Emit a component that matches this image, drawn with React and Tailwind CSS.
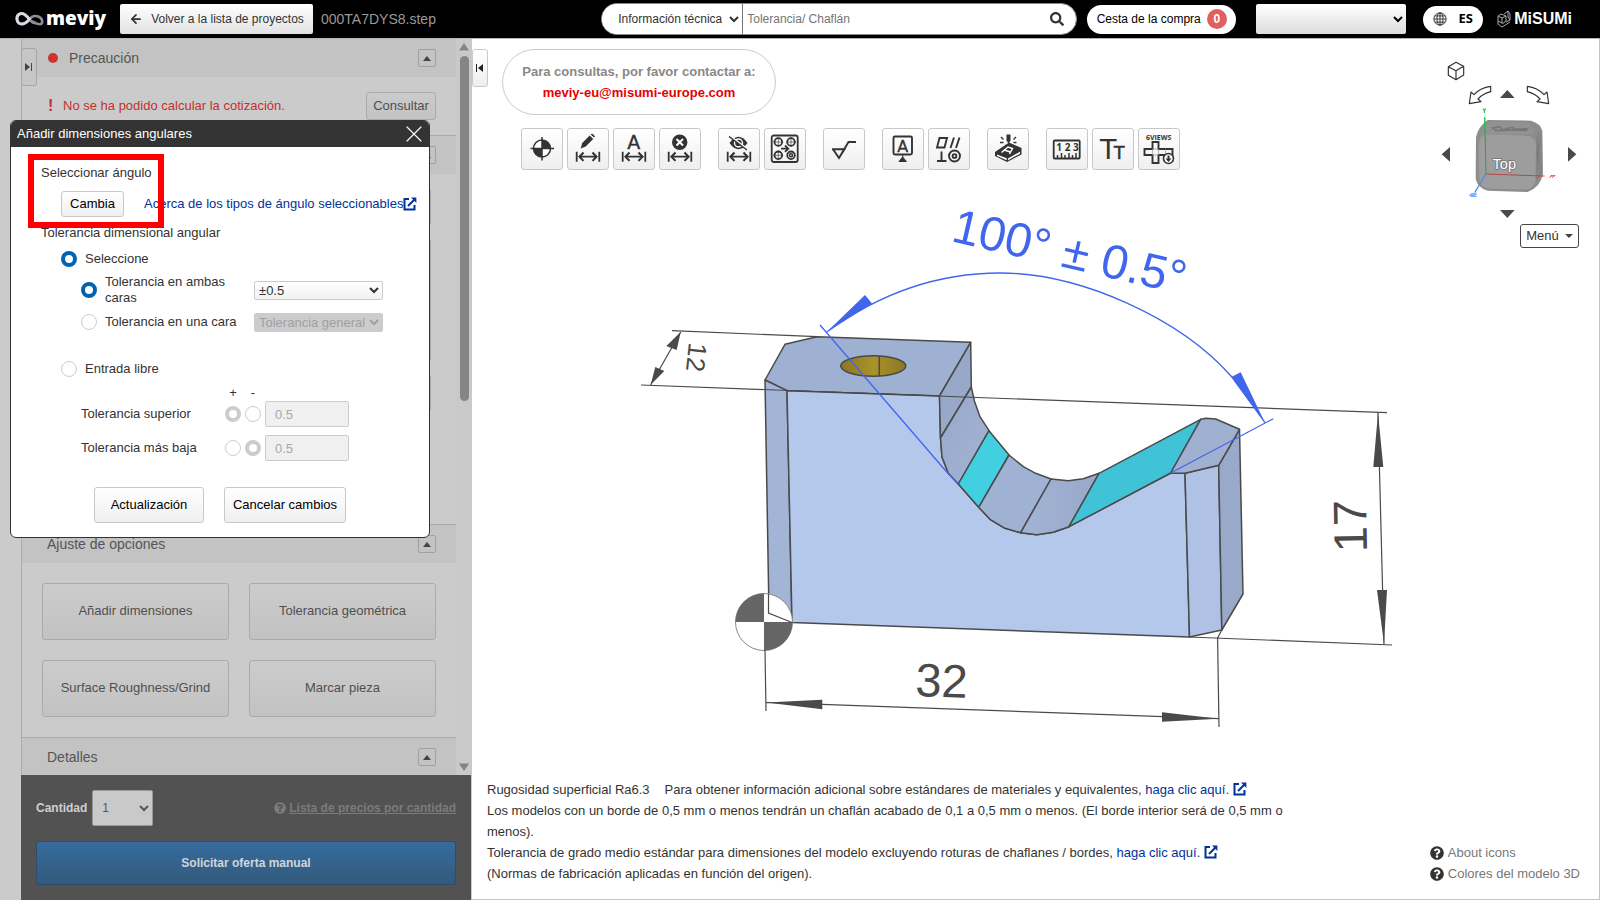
import { useState } from 'react'
import { ArrowLeft, X } from 'lucide-react'
import { FaQuestionCircle, FaSearch } from 'react-icons/fa'

const INK = '#333333'
const EDGE = '#4a4a4a'
const BLUE = '#4066ee'

const PLAIN_BUTTON = 'border border-[#c8c8c8] rounded-[3px] bg-linear-to-b from-white to-[#efefef]'
const SHADED_BUTTON = 'border border-[#aaaaaa] rounded-[3px] bg-linear-to-b from-[#cccccc] to-[#c2c2c2] text-[#4f4f4f]'
const RADIO = 'appearance-none size-4 shrink-0 rounded-full bg-white border border-[#cccccc] checked:border-4 checked:border-[#0063b1] disabled:checked:border-[#cccccc]'

function ExternalIcon() {
  return (
    <svg viewBox="0 0 14 14" className="inline size-[14px] align-[-2px]" fill="none" stroke="#003399" strokeWidth="2">
      <path d="M6 2H1.5v10.500h10V8" />
      <path d="M5 9l6.500-6.500" />
      <path d="M8 .6h5.400V6z" fill="#003399" stroke="none" />
    </svg>
  )
}

function Header() {
  return (
    <header className="h-[38px] shrink-0 bg-black flex items-center text-xs">
      <a href="#home" className="flex items-center ml-[15px] w-[105px] text-white" aria-label="meviy">
        <svg viewBox="0 0 29 16" className="w-[29px] h-4" fill="none">
          <path d="M21 11C16 15 12 1 6 2.500C0 4 1 13 7 13C13 13 14 5 20 5C25 5 28 8 27 12C26 15 20 12 16 10" stroke="#8d8d95" strokeWidth="2.600" />
          <path d="M15 9C12 5 9 2 6 2.500C0 4 1 13 7 13C10 13 12 11 14 9" stroke="#d9d9de" strokeWidth="3" />
        </svg>
        <span className="font-['Open_Sans'] font-extrabold text-[19px] leading-6 ml-[2px] pb-[2px]">meviy</span>
      </a>
      <button className="h-[30px] w-[193px] rounded-[2px] bg-linear-to-b from-white to-[#e2e2e2] text-[#333] flex items-center justify-center gap-2">
        <ArrowLeft className="size-[14px]" strokeWidth={3} />
        Volver a la lista de proyectos
      </button>
      <span className="ml-2 text-sm text-[#999999]">000TA7DYS8.step</span>

      <form className="ml-auto flex items-center h-8 w-[476px] rounded-full bg-white border border-[#888] overflow-hidden">
        <select aria-label="Tipo de búsqueda" defaultValue="info" className="h-full w-[141px] pl-3 pr-1 border-r border-[#777] bg-white text-[#333] outline-none">
          <option value="info">Información técnica</option>
        </select>
        <input aria-label="Texto de búsqueda" placeholder="Tolerancia/ Chaflán" className="flex-1 h-full px-1 outline-none placeholder:text-[#757575]" />
        <button type="button" aria-label="Buscar" className="px-3">
          <FaSearch className="size-[14px] text-[#333]" />
        </button>
      </form>
      <button className="ml-[10px] h-[29px] w-[149px] rounded-full bg-white text-black flex items-center justify-center gap-[6px]">
        Cesta de la compra
        <span className="size-5 rounded-full bg-[#e06060] text-white font-bold leading-5">0</span>
      </button>
      <select aria-label="Cuenta" className="ml-5 h-[30px] w-[150px] rounded-[2px] bg-linear-to-b from-white to-[#dddddd] pr-1">
        <option></option>
      </select>
      <button className="ml-[17px] h-[27px] w-[60px] rounded-full bg-white flex items-center justify-center gap-[11px] font-['Open_Sans'] font-bold text-[13px]">
        <svg viewBox="0 0 16 16" className="size-[14px]" fill="none" stroke="#222">
          <circle cx="8" cy="8" r="7" />
          <ellipse cx="8" cy="8" rx="3.500" ry="7" />
          <path d="M8 1v14M1 8h14M2 4.500h12M2 11.500h12" />
        </svg>
        ES
      </button>
      <a href="#misumi" className="ml-[14px] mr-7 flex items-center gap-[3px] text-white" aria-label="MISUMI">
        <svg viewBox="0 0 14 18" className="w-[14px] h-[18px]" fill="none" stroke="#aaa">
          <path d="M1 6l4 2v5l-4-2zM5 8l4-2v5l-4 3M1 6l3-2 5 2M7 4l4-3 2 3v6l-4 2M11 1v6l2 3M1 11v3l4 3 8-5" />
        </svg>
        <span className="font-bold text-base leading-6">MiSUMi</span>
      </a>
    </header>
  )
}

function SectionHeader({ title, alert }) {
  return (
    <div className="h-[38px] shrink-0 flex items-center bg-[#c3c3c3] pl-[25px] pr-5 text-sm text-[#555]">
      {alert && <span className="size-[10px] rounded-full bg-[#cc3333] mr-[11px] ml-[1px]"></span>}
      <h2>{title}</h2>
      <button aria-label={`Plegar ${title}`} className="ml-auto size-[18px] border border-[#a0a0a0] rounded-[2px] flex items-center justify-center">
        <svg viewBox="0 0 8 5" className="w-2 h-[5px]"><path d="M0 5l4-5 4 5z" fill="#444" /></svg>
      </button>
    </div>
  )
}

const OPTIONS = ['Añadir dimensiones', 'Tolerancia geométrica', 'Surface Roughness/Grind', 'Marcar pieza']

function Sidebar() {
  return (
    <aside className="w-[472px] shrink-0 flex bg-[#cbcbcb]">
      <div className="w-[21px] shrink-0"></div>
      <div className="flex-1 min-w-0 flex flex-col relative">
        <button aria-label="Expandir panel" className="absolute top-[9px] left-0 w-4 h-[38px] border border-[#a5a5a5] rounded-[3px] bg-[#c6c6c6] flex items-center justify-center">
          <svg viewBox="0 0 8 8" className="size-2"><path d="M0 0l5 4-5 4zM6 0h1v8h-1z" fill="#444" /></svg>
        </button>
        <div className="flex-1 min-h-0 flex">
          <div className="flex-1 flex flex-col overflow-hidden border-l border-[#acacac]">
            <SectionHeader title="Precaución" alert />
            <div className="h-[58px] shrink-0 flex items-center pl-[26px] pr-5 text-[13px] text-[#c62f2f]">
              <b className="w-[15px] text-base">!</b>
              No se ha podido calcular la cotización.
              <button className={`${SHADED_BUTTON} ml-auto h-7 w-[70px]`}>Consultar</button>
            </div>
            <div className="border-t border-[#a9a9a9]"><SectionHeader title="" /></div>
            <div className="h-[350px] shrink-0 flex flex-col gap-4 pt-4 pl-5 pr-[25px]">
              <div className="h-[34px] border border-[#aaa]"></div>
              <div className="h-[120px] border border-[#aaa]"></div>
              <div className="h-[34px] border border-[#aaa]"></div>
            </div>
            <div className="border-t border-[#a9a9a9]"><SectionHeader title="Ajuste de opciones" /></div>
            <div className="grid grid-cols-2 gap-5 p-5 text-[13px]">
              {OPTIONS.map((name) => (
                <button key={name} className={`${SHADED_BUTTON} h-[57px] pb-[1px]`}>{name}</button>
              ))}
            </div>
            <div className="border-t border-[#a9a9a9]"><SectionHeader title="Detalles" /></div>
          </div>
          <div className="w-4 shrink-0 bg-[#c9c9c9] flex flex-col items-center py-1">
            <svg viewBox="0 0 10 8" className="w-[10px] h-2"><path d="M0 7.500L5 0l5 7.500z" fill="#858585" /></svg>
            <div className="w-[9px] h-[345px] mt-[5px] rounded-full bg-[#858585]"></div>
            <svg viewBox="0 0 10 8" className="w-[10px] h-2 mt-auto"><path d="M0 .500h10L5 8z" fill="#858585" /></svg>
          </div>
        </div>
        <div className="h-[125px] shrink-0 mr-[1px] pt-[15px] pl-[15px] pr-[15px] bg-[#525252] text-xs">
          <div className="flex items-center">
            <label htmlFor="qty" className="font-bold text-[#cfcfcf]">Cantidad</label>
            <select id="qty" className="ml-[5px] h-9 w-[61px] pl-[5px] pr-[6px] rounded-[2px] border border-[#999] bg-[#c9c9c9] text-[#555]">
              <option>1</option>
            </select>
            <a href="#precios" className="ml-auto flex items-center gap-[3px] font-bold text-[#7b7b7b]">
              <FaQuestionCircle className="size-3" />
              <span className="underline">Lista de precios por cantidad</span>
            </a>
          </div>
          <button className="mt-[15px] w-full h-11 rounded-[3px] border border-[#2b4d69] bg-linear-to-b from-[#356c9f] to-[#335a7b] text-[#d0d6dc] font-bold">
            Solicitar oferta manual
          </button>
        </div>
      </div>
    </aside>
  )
}

const DIM_ARROW = (
  <g fill="none" stroke={INK} strokeWidth="1.800">
    <path d="M9.700 23.700v10M32.300 23.700v10M12 28.700h18" />
    <path d="M16.500 24.500l-4 4.200 4 4.200M25.500 24.500l4 4.200-4 4.200" strokeWidth="2.100" />
  </g>
)

function HoleMark({ x, y, filled }) {
  return (
    <g fill="none" stroke={INK}>
      <circle cx={x} cy={y} r="3.800" strokeWidth="1.800" />
      {filled
        ? <circle cx={x} cy={y} r="1.500" strokeWidth="1.500" />
        : <path d={`M${x - 5} ${y}h10M${x} ${y - 5}v10`} strokeWidth=".6" />}
    </g>
  )
}

const TOOLS = [
  [
    ['Origen', <g key="i">
      <circle cx="21" cy="20.500" r="8.500" fill="#fff" stroke={INK} strokeWidth="1.500" />
      <path d="M21 20.500V12a8.500 8.500 0 0 1 8.500 8.500zM21 20.500V29a8.500 8.500 0 0 1-8.500-8.500z" fill={INK} />
      <path d="M21 9v23.500M9.500 20.500h23.500" stroke={INK} strokeWidth="1.500" />
    </g>],
    ['Editar dimensión', <g key="i">
      {DIM_ARROW}
      <path d="M13.700 20.500l1.500-5.500 7.500-7.500 3.500 3.500-7.500 7.500zM23.700 6.500l1-.7q1.500-.3 3.300 2.800l-1 1z" fill={INK} />
    </g>],
    ['Texto de dimensión', <g key="i">
      {DIM_ARROW}
      <text x="20.800" y="20.500" textAnchor="middle" fontSize="19" fill={INK} stroke={INK} strokeWidth=".4" fontFamily="DejaVu Sans">A</text>
    </g>],
    ['Borrar dimensión', <g key="i">
      {DIM_ARROW}
      <circle cx="20.700" cy="14.300" r="7.700" fill={INK} />
      <path d="M17.500 11l6.500 6.500M24 11l-6.500 6.500" stroke="#fff" strokeWidth="2" />
    </g>],
  ],
  [
    ['Ocultar dimensión', <g key="i">
      {DIM_ARROW}
      <path d="M11.500 15q9-12.500 18 0q-9 12.500-18 0z" fill={INK} />
      <circle cx="20.500" cy="15" r="4" fill={INK} stroke="#fff" strokeWidth="1.400" />
      <path d="M12.500 8.500L30 21.500" stroke="#fff" strokeWidth="2" />
      <path d="M11 8.500L29 22" stroke={INK} strokeWidth="1.500" />
    </g>],
    ['Agujeros', <g key="i">
      <rect x="7.700" y="7.500" width="26" height="26.500" rx="2" fill="none" stroke={INK} strokeWidth="1.800" />
      <HoleMark x={14.3} y={14} />
      <HoleMark x={27} y={14} />
      <HoleMark x={14.3} y={27.3} />
      <HoleMark x={27} y={27.3} filled />
      <path d="M17 20.700h7M21 17.500l3.300 3.200-3.300 3.200" fill="none" stroke={INK} strokeWidth="1.800" />
    </g>],
  ],
  [
    ['Rugosidad', <path key="i" d="M9 21.300h12.500L16 30L10 21.300M16 30L25.500 14h7.500" fill="none" stroke={INK} strokeWidth="1.900" />],
  ],
  [
    ['Nota', <g key="i">
      <rect x="11.500" y="8.500" width="18.500" height="18" rx="1.500" fill="none" stroke={INK} strokeWidth="1.900" />
      <text x="20.700" y="23.500" textAnchor="middle" fontSize="16" fill={INK} stroke={INK} strokeWidth=".3" fontFamily="DejaVu Sans">A</text>
      <path d="M20.700 27v4M17 33.500l3.700-4.500 3.700 4.500z" stroke={INK} fill={INK} />
    </g>],
    ['Tolerancia geométrica', <g key="i" fill="none" stroke={INK} strokeWidth="1.900">
      <path d="M11.500 10h7.500l-2.500 9.500h-7.500zM26 9.500l-3.500 10.500M31.500 9.500l-3.500 10.500M13.500 23.500v9.500M9 33h9.500" />
      <circle cx="26.500" cy="28" r="5.500" />
      <circle cx="26.500" cy="28" r="1.900" />
    </g>],
  ],
  [
    ['Marcado', <g key="i">
      <path d="M8 24L22 14.500 34.500 20v6.500L20 34 8 28z" fill={INK} />
      <path d="M10 26.500l9.700 3.700v2L10 28zM21 30.500l12-6.800v2L21 32.300z" fill="#fff" />
      <path d="M14.500 24.500L21 19l4.500 1.500-3 5.500M17 22l6.500 2" fill="none" stroke="#fff" strokeWidth="1.500" />
      <path d="M19.500 6.500h4v6l-2 3-2-3z" fill={INK} />
      <path d="M14 9l2.500 2.500M13 14.500h3.500M29 9l-2.500 2.500M26.500 14.500h3" stroke={INK} strokeWidth="1.400" />
    </g>],
  ],
  [
    ['Escala', <g key="i">
      <rect x="7.700" y="12.500" width="26" height="18" rx="1" fill="none" stroke={INK} strokeWidth="1.800" />
      <text x="21.500" y="22.700" textAnchor="middle" fontSize="10" fontWeight="700" fill={INK} fontFamily="Open Sans">1 2 3</text>
      <path d="M11.500 27v3M15.500 25v5M19 27v3M23 25v5M26.500 27v3M30 25v5" stroke={INK} strokeWidth="1.500" />
    </g>],
    ['Tamaño de texto', <g key="i" fill={INK} fontFamily="DejaVu Sans">
      <text x="8" y="30.700" fontSize="27">T</text>
      <text x="22" y="30.700" fontSize="17" stroke={INK} strokeWidth=".6">T</text>
    </g>],
    ['6VIEWS', <g key="i">
      <text x="20.700" y="11.500" textAnchor="middle" fontSize="7" fontWeight="700" fill={INK} fontFamily="Open Sans">6VIEWS</text>
      <path d="M14.500 14h6v7h14v6h-14v8h-6v-8h-8v-6h8z" fill="none" stroke={INK} strokeWidth="1.900" />
      <path d="M14.500 21h6v6h-6zM27.500 21v6" fill="none" stroke="#999" strokeWidth=".7" />
      <circle cx="30.500" cy="30.500" r="5" fill="#fff" stroke={INK} strokeWidth="1.600" />
      <path d="M29.500 27.500h2v3h2l-3 3.500-3-3.500h2z" fill={INK} />
    </g>],
  ],
]

function Toolbar() {
  return (
    <div className="flex gap-[17px] mt-[13px] ml-[49px]">
      {TOOLS.map((group) => (
        <div key={group[0][0]} className="flex gap-1">
          {group.map(([name, icon]) => (
            <button key={name} aria-label={name} className={`${PLAIN_BUTTON} size-[42px]`}>
              <svg viewBox="1 1 40 40" className="size-10">{icon}</svg>
            </button>
          ))}
        </div>
      ))}
    </div>
  )
}

// Part geometry, in viewer coordinates
function PartDrawing() {
  return (
    <svg viewBox="472 170 1127 608" preserveAspectRatio="xMinYMin meet" className="w-full flex-1 min-h-0">
      <defs>
        <linearGradient id="wallA" x1="0" y1="0" x2="1" y2="1">
          <stop offset="0" stopColor="#97a7c7" />
          <stop offset="1" stopColor="#a2b4d5" />
        </linearGradient>
        <linearGradient id="wallB" x1="0" y1="0" x2="1" y2="0">
          <stop offset="0" stopColor="#a2b4d5" />
          <stop offset="1" stopColor="#98a8c8" />
        </linearGradient>
        <linearGradient id="hole" x1="0" y1="0" x2="1" y2="0">
          <stop offset="0" stopColor="#8c7622" />
          <stop offset=".5" stopColor="#a8932b" />
          <stop offset="1" stopColor="#8c7622" />
        </linearGradient>
      </defs>

      <g stroke={EDGE} strokeWidth="1.500" strokeLinejoin="round">
        <path d="M765 380L785 344.300 817 336.700 970.700 342.300 939.500 396 787 390.700z" fill="#9fb1d2" />
        <path d="M765 380L787 390.700 792 622.500 769 613z" fill="#a3b5d6" />
        <path d="M787 390.700L939.500 396 940.500 438 942 457 948.300 473.300 958.300 484 978.700 507.300 990 519.300 1005 528.300 1020.700 532.700 1036.700 534.700 1053.300 532.300 1069 526.700 1170.700 473 1185 473.300 1189.500 637 792 622.500z" fill="#b4c8ec" />
        <path d="M1185 473.300L1218.700 465.300 1221.800 630 1189.500 637z" fill="#afc1e4" />
        <path d="M1218.700 465.300L1239.500 429.300 1243 594 1221.800 630z" fill="#99a9c9" />
        <path d="M970.700 342.300L971.300 387 940.500 438 939.500 396z" fill="#98a8c8" />
        <path d="M971.300 387L974.300 400.700 980 416.700 989 430.700 958.300 484 948.300 473.300 942 457 940.500 438z" fill="url(#wallA)" />
        <path d="M989 430.700L1009 455 978.700 507.300 958.300 484z" fill="#42cfe0" />
        <path d="M1009 455L1023.300 466.700 1035.700 473.300 1051 479 1020.700 532.700 1005 528.300 990 519.300 978.700 507.300z" fill="#a0b2d3" />
        <path d="M1051 479L1068.300 480.700 1083.300 478.700 1099 473.300 1069 526.700 1053.300 532.300 1036.700 534.700 1020.700 532.700z" fill="url(#wallB)" />
        <path d="M1099 473.300L1200.700 419.300 1170.700 473 1069 526.700z" fill="#40c3d6" />
        <path d="M1200.700 419.300L1206 418.300 1215.700 419 1239.500 429.300 1218.700 465.300 1185 473.300 1170.700 473z" fill="#9fb0d1" />
        <ellipse cx="873.300" cy="366" rx="32.500" ry="10.300" fill="url(#hole)" />
        <path d="M879.300 356v20" />
      </g>

      {/* Origin marker */}
      <circle cx="764" cy="622" r="28.500" fill="#fff" stroke="#888" />
      <path d="M764 622V593.500a28.500 28.500 0 0 0-28.500 28.500zM764 622V650.500a28.500 28.500 0 0 0 28.500-28.500z" fill="#656565" />
      <path d="M768.500 594v19l23.500 9.500" fill="none" stroke={EDGE} strokeWidth="1.200" />

      {/* Linear dimensions */}
      <g fill="none" stroke={EDGE} strokeWidth="1.200">
        <path d="M672 330.700L817 336.700M641 385L1387 412.700M680.700 332L650.700 384.700" />
        <path d="M1378 413L1384 644M1189 637L1392 645M1221.800 630L1217.600 638" />
        <path d="M765 650L766 711M1217.600 638L1219 727M766 702.300L1218.800 718.700" />
      </g>
      <g fill={EDGE}>
        <path d="M680.700 332L666.300 346 676.700 350zM650.700 384.700L655.300 367 664.300 371z" />
        <path d="M1378 413L1373.300 467h10zM1384 644L1377 590h10z" />
        <path d="M766 702.500L822.300 699.700v9.500zM1218.800 718.700L1162 712.300v9.500z" />
      </g>
      <g fill={EDGE} fontFamily="Liberation Sans" fontSize="47">
        <text x="915" y="696" transform="rotate(2 915 696)">32</text>
        <text x="1367" y="552" transform="rotate(-91 1367 552)">17</text>
        <text x="689" y="342" fontSize="26" transform="rotate(96 689 342)">12</text>
      </g>

      {/* Angular dimension */}
      <g fill="none" stroke={BLUE} strokeWidth="1.300">
        <path d="M826.700 332C850 315 910 273 1000 273C1080 273 1180 318 1231.700 376.700L1265 422.700" />
        <path d="M820 325L945 470 958.300 484M1273.300 418.700L1170.700 473" />
      </g>
      <path d="M826.700 332L865 295 872 303.500zM1265 422.700L1231.300 377 1240.700 372.300z" fill={BLUE} />
      <text x="950" y="241" transform="rotate(13 950 241)" fontFamily="Liberation Sans" fontSize="48" fill={BLUE}>100° ± 0.5°</text>
    </svg>
  )
}

function ViewCube() {
  return (
    <svg viewBox="-3 0 600 510" className="w-[200px] h-[170px]">
      <g fill="#fff" stroke="#333" strokeWidth="3.500" strokeLinejoin="round">
        <path d="M145 50l23-13 23 12v26l-23 14-23-13zM145 50l23 12 23-13M168 62v27" />
        <path d="M272 109v16q-24 6-38 22l9 8-35 6 5-35 9 8q20-22 50-25zM382 109v16q24 6 38 22l-9 8 35 6-5-35-9 8q-20-22-50-25z" />
      </g>
      <path d="M300 144l22-24 22 24zM300 480h44l-22 24zM150 291v44l-25-22zM504 291v44l25-22z" fill="#4a4a4a" />
      <path d="M228 262q5-30 35-52l130 2q28 8 34 30l2 130q-8 40-46 54l-120-4q-30-8-36-36z" fill="#8d8d8d" />
      <path d="M236 280q4-26 20-28l132 6q18 8 20 24l-2 110q-6 22-24 26l-118-2q-22-6-26-24z" fill="#9d9d9d" />
      <path d="M240 256q10-30 34-40l112 2q14 8 16 34z" fill="#929292" />
      <path d="M408 260q12-26 16 0l2 100q-4 28-18 34z" fill="#858585" />
      <path d="M278 234l22-4 6 10 30-8 10 6 36-2-4 6-30-2-60 2z" fill="none" stroke="#777" strokeWidth="5" />
      <path d="M417 280q-6 20-2 60" fill="none" stroke="#777" strokeWidth="4" />
      <path d="M254 202l4 170" stroke="#2f9e4f" strokeWidth="3" />
      <path d="M254 202l1 34" stroke="#1fd04a" strokeWidth="4" />
      <path d="M249 176l4 5 4-5M253 181v8" stroke="#1fd04a" strokeWidth="4" fill="none" />
      <path d="M258 372l170 6" stroke="#b04a4a" strokeWidth="3" />
      <path d="M426 378h8M448 383l8-6M452 377l14 0M456 383l8-6" stroke="#ff4040" strokeWidth="3" />
      <path d="M258 372l-34 56" stroke="#4d8fd8" strokeWidth="4" />
      <path d="M212 432h18l-18 7h18M208 437l12-7" stroke="#6fb2ff" strokeWidth="4" fill="none" />
      <text x="313" y="356" textAnchor="middle" fontSize="44" fill="#ffffff" stroke="#707070" strokeWidth="5" paintOrder="stroke" fontFamily="Liberation Sans">Top</text>
    </svg>
  )
}

function Viewer() {
  return (
    <main className="relative flex-1 min-w-0 flex flex-col bg-white border-r border-b border-[#c4c4c4] text-[13px] text-[#333]">
      <button aria-label="Contraer panel" className={`${PLAIN_BUTTON} absolute top-[10px] left-0 w-4 h-[38px] flex items-center justify-center`}>
        <svg viewBox="0 0 8 8" className="size-2"><path d="M7 0L2 4l5 4zM0 0h1v8h-1z" fill="#222" /></svg>
      </button>
      <div className="absolute right-0 top-[11px] flex flex-col items-end">
        <ViewCube />
        <button className="mt-1 mr-5 h-6 w-[59px] border border-[#444] rounded-[3px] bg-white flex items-center justify-center gap-[6px]">
          Menú
          <svg viewBox="0 0 8 4" className="w-2 h-1"><path d="M0 0h8L4 4z" fill="#444" /></svg>
        </button>
      </div>

      <div className="mt-[10px] ml-[30px] w-[274px] h-[66px] rounded-full border border-[#cccccc] flex flex-col items-center justify-center font-bold leading-[21px]">
        <span className="text-[#888888]">Para consultas, por favor contactar a:</span>
        <a href="mailto:meviy-eu@misumi-europe.com" className="text-[#e60000]">meviy-eu@misumi-europe.com</a>
      </div>
      <Toolbar />
      <PartDrawing />

      <div className="shrink-0 flex items-end justify-between pl-[15px] pr-[19px] pb-[15px] leading-[21px]">
        <div className="max-w-[800px]">
          <p>
            <span className="mr-[15px]">Rugosidad superficial Ra6.3</span>
            Para obtener información adicional sobre estándares de materiales y equivalentes,{' '}
            <a href="#materiales" className="text-[#003399]">haga clic aquí. <ExternalIcon /></a>
          </p>
          <p>Los modelos con un borde de 0,5 mm o menos tendrán un chaflán acabado de 0,1 a 0,5 mm o menos. (El borde interior será de 0,5 mm o menos).</p>
          <p>
            Tolerancia de grado medio estándar para dimensiones del modelo excluyendo roturas de chaflanes / bordes,{' '}
            <a href="#tolerancia" className="text-[#003399]">haga clic aquí. <ExternalIcon /></a>
          </p>
          <p>(Normas de fabricación aplicadas en función del origen).</p>
        </div>
        <div className="text-[#777]">
          <a href="#iconos" className="flex items-center gap-1"><FaQuestionCircle className="size-[14px] text-[#333]" />About icons</a>
          <a href="#colores" className="flex items-center gap-1"><FaQuestionCircle className="size-[14px] text-[#333]" />Colores del modelo 3D</a>
        </div>
      </div>
    </main>
  )
}

function ToleranceRow({ label, name, sign, onSign }) {
  return (
    <div className="flex items-center h-[26px] mb-2">
      <label htmlFor={name} className="w-[144px]">{label}</label>
      <input type="radio" name={`${name}-sign`} aria-label={`${label} +`} disabled checked={sign === '+'} onChange={() => onSign('+')} className={RADIO} />
      <input type="radio" name={`${name}-sign`} aria-label={`${label} -`} disabled checked={sign === '-'} onChange={() => onSign('-')} className={`${RADIO} ml-1`} />
      <input id={name} disabled defaultValue="0.5" className="ml-1 w-[84px] h-[26px] border border-[#cccccc] rounded-[2px] bg-[#f0f0f0] pl-[9px] text-[#a8a8a8]" />
    </div>
  )
}

function AngleDialog() {
  const [mode, setMode] = useState('select')
  const [side, setSide] = useState('both')
  const [upper, setUpper] = useState('+')
  const [lower, setLower] = useState('-')

  return (
    <section role="dialog" aria-label="Añadir dimensiones angulares" className="absolute left-[10px] top-[120px] w-[420px] bg-white border border-[#333] rounded-[6px] overflow-hidden text-[13px] leading-4 text-[#333]">
      <header className="h-[26px] bg-[#333] text-white flex items-center justify-between pl-[6px] pr-[1px]">
        <h1>Añadir dimensiones angulares</h1>
        <button aria-label="Cerrar"><X className="size-7" strokeWidth={1} /></button>
      </header>
      <div className="pl-[30px] pt-[18px] pb-[14px]">
        <p>Seleccionar ángulo</p>
        <div className="flex items-center mt-[10px] ml-5">
          <button className={`${PLAIN_BUTTON} h-[26px] w-[63px] text-black`}>Cambia</button>
          <a href="#angulos" className="ml-5 flex items-center text-[#003399]">Acerca de los tipos de ángulo seleccionables<ExternalIcon /></a>
        </div>
        <p className="mt-2">Tolerancia dimensional angular</p>

        <label className="flex items-center gap-2 mt-[10px] ml-5">
          <input type="radio" name="mode" checked={mode === 'select'} onChange={() => setMode('select')} className={RADIO} />
          Seleccione
        </label>
        <div className="flex items-center mt-[7px] ml-10">
          <label className="flex items-center gap-2 w-[173px]">
            <input type="radio" name="side" checked={side === 'both'} onChange={() => setSide('both')} className={RADIO} />
            <span className="w-[130px]">Tolerancia en ambas caras</span>
          </label>
          <select aria-label="Tolerancia en ambas caras" className="w-[129px] h-[19px] border border-[#cccccc] rounded-[2px] bg-linear-to-b from-white to-[#f2f2f2]">
            <option>±0.5</option>
          </select>
        </div>
        <div className="flex items-center mt-[6px] ml-10 h-5">
          <label className="flex items-center gap-2 w-[173px]">
            <input type="radio" name="side" checked={side === 'one'} onChange={() => setSide('one')} className={RADIO} />
            Tolerancia en una cara
          </label>
          <select aria-label="Tolerancia en una cara" disabled={side !== 'one'} className="w-[129px] h-[19px] border border-[#cccccc] rounded-[2px] bg-[#cccccc] text-[#a0a0a0] disabled:opacity-100">
            <option>Tolerancia general</option>
          </select>
        </div>
        <label className="flex items-center gap-2 mt-[29px] ml-5">
          <input type="radio" name="mode" checked={mode === 'free'} onChange={() => setMode('free')} className={RADIO} />
          Entrada libre
        </label>
        <div className="flex gap-1 mt-2 ml-[184px] text-center">
          <span className="w-4">+</span>
          <span className="w-4">-</span>
        </div>
        <div className="ml-10">
          <ToleranceRow label="Tolerancia superior" name="upper" sign={upper} onSign={setUpper} />
          <ToleranceRow label="Tolerancia más baja" name="lower" sign={lower} onSign={setLower} />
        </div>
        <div className="flex gap-5 mt-[26px] ml-[53px] text-black">
          <button className={`${PLAIN_BUTTON} h-9 w-[110px]`}>Actualización</button>
          <button className={`${PLAIN_BUTTON} h-9 w-[122px]`}>Cancelar cambios</button>
        </div>
      </div>
    </section>
  )
}

function App() {
  return (
    <div className="relative h-screen flex flex-col overflow-hidden bg-white font-['Liberation_Sans',Arial,sans-serif]">
      <Header />
      <div className="flex-1 min-h-0 flex border-t border-[#b5b5b5]">
        <Sidebar />
        <Viewer />
      </div>
      <AngleDialog />
      {/* Highlight over the angle picker */}
      <div className="absolute left-7 top-[154px] w-[136px] h-[74px] border-6 border-[#ff0000] pointer-events-none"></div>
    </div>
  )
}

export default App
